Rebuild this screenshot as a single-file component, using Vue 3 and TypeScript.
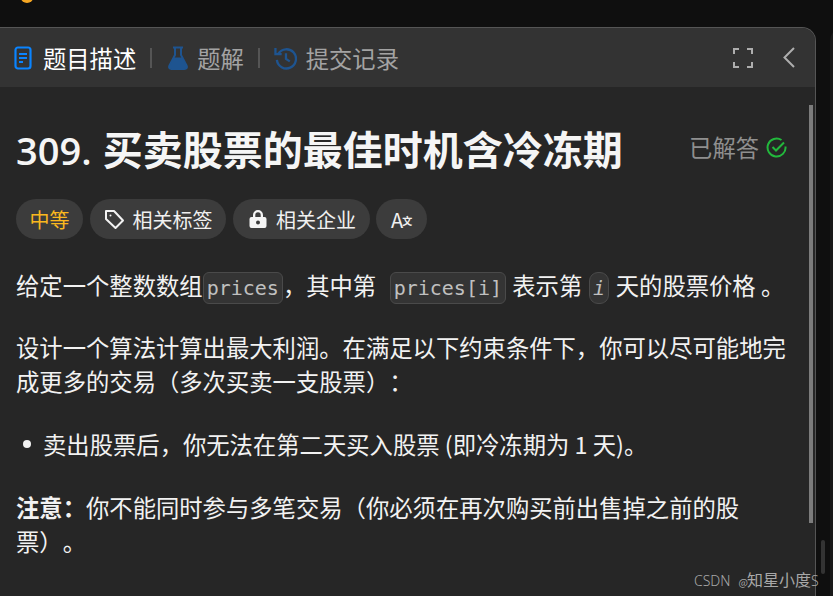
<template>
  <div class="screen">
    <i class="top-dot"></i>
    <div class="window">
      <section class="panel">
        <header class="tabs">
          <div class="tab active">
            <svg class="doc-icon" width="18" height="24" viewBox="0 0 18 24" fill="none" stroke="#0a84ff" stroke-width="2.200">
              <rect x="1.500" y="1.500" width="15" height="21" rx="2.500" />
              <path d="M5 8h8M5 12h8M5 16h4" />
            </svg>
            <span>题目描述</span>
          </div>
          <i class="divider"></i>
          <div class="tab">
            <svg class="flask-icon" width="20" height="24" viewBox="0 0 20 24" fill="none" stroke="#1e5490" stroke-width="2">
              <path d="M5 1.500h10M7 1.500V9L1.500 19.500c-1 2 0 3.500 2 3.500h13c2 0 3-1.500 2-3.500L13 9V1.500" />
              <path d="M5.500 11.500h9l4 8.500c.6 1.500-.3 2.500-1.800 2.500H3.300c-1.500 0-2.400-1-1.800-2.500z" fill="#1e5490" stroke="none" />
            </svg>
            <span>题解</span>
          </div>
          <i class="divider"></i>
          <div class="tab">
            <svg width="23" height="24" viewBox="0 0 24 24" fill="none" stroke="#1e5490" stroke-width="2.400">
              <path d="M4.500 7.500A10 10 0 1 1 3 14" />
              <path d="M1.500 1.500v6.500h6.500" />
              <path d="M12.500 7v6l4 2.500" />
            </svg>
            <span>提交记录</span>
          </div>
          <div class="tab-tools">
            <svg width="20" height="20" viewBox="0 0 20 20" fill="none" stroke="#aeaeae" stroke-width="2">
              <path d="M1 6V1h5M14 1h5v5M19 14v5h-5M6 19H1v-5" />
            </svg>
            <svg width="12" height="21" viewBox="0 0 12 21" fill="none" stroke="#aeaeae" stroke-width="2">
              <path d="M11 1 1.500 10.500 11 20" />
            </svg>
          </div>
        </header>

        <main class="content">
          <div class="title-row">
            <h1><span class="num">309.</span> 买卖股票的最佳时机含冷冻期</h1>
            <div class="solved">
              <span>已解答</span>
              <svg width="21" height="21" viewBox="0 0 21 21" fill="none" stroke="#22b83c" stroke-width="2">
                <path d="M19.500 9.500a9 9 0 1 1-4-6.500" />
                <path d="m6.500 10 3.500 3.500 8-8" />
              </svg>
            </div>
          </div>

          <div class="tags">
            <span class="tag level">中等</span>
            <span class="tag">
              <svg width="21" height="21" viewBox="0 0 21 21" fill="none" stroke="#f2f2f2" stroke-width="2">
                <path d="M2 2h8l9 9.500-7.500 7.500L2 10z" stroke-linejoin="round" />
                <circle cx="6.500" cy="6.500" r="1" fill="#f2f2f2" stroke="none" />
              </svg>
              相关标签
            </span>
            <span class="tag company">
              <svg width="18" height="20" viewBox="0 0 18 20" fill="#f4f4f4">
                <path fill-rule="evenodd" d="M4 8V6a5 5 0 0 1 10 0v2h1.500A2 2 0 0 1 17.500 10v7a2 2 0 0 1-2 2h-13a2 2 0 0 1-2-2v-7a2 2 0 0 1 2-2zm2.300 0h5.400V6a2.700 2.700 0 0 0-5.400 0zM9 11.500a2 2 0 1 0 0 4 2 2 0 0 0 0-4z" />
              </svg>
              相关企业
            </span>
            <span class="tag translate">A<small>文</small></span>
          </div>

          <p class="first">给定一个整数数组<code>prices</code>，其中第 &nbsp;<code class="mid">prices[i]</code> 表示第 <code class="var"><em>i</em></code> 天的股票价格 。</p>
          <p>设计一个算法计算出最大利润。在满足以下约束条件下，你可以尽可能地完成更多的交易（多次买卖一支股票）：</p>
          <ul>
            <li><span>卖出股票后，你无法在第二天买入股票 (即冷冻期为 1 天)。</span></li>
          </ul>
          <p class="note"><strong>注意：</strong>你不能同时参与多笔交易（你必须在再次购买前出售掉之前的股票）。</p>
        </main>
        <i class="scroll-thumb"></i>
      </section>
      <div class="next-panel"></div>
    </div>
    <i class="outer-thumb"></i>
    <span class="watermark"><span class="latin">CSDN</span><span class="at">@</span>知星小度<span class="latin">S</span></span>
  </div>
</template>

<script setup lang="ts">
</script>

<style>
html, body {
  margin: 0;
  background: #0f0f0f;
  overflow: hidden;
}
</style>

<style scoped>
.screen {
  position: relative;
  width: 833px;
  height: 596px;
  overflow: hidden;
  background: #0f0f0f;
  font-family: "Noto Sans CJK SC", "Liberation Sans", sans-serif;
  color: #f2f2f2;
  text-spacing-trim: space-all;
}

.top-dot {
  position: absolute;
  left: 21px;
  top: -7px;
  width: 12px;
  height: 10px;
  border-radius: 50%;
  background: #f5a623;
}

.window {
  padding-top: 27px;
  display: flex;
  gap: 14px;
}

.panel {
  position: relative;
  flex: none;
  width: 816px;
  height: 569px;
  box-sizing: border-box;
  background: #262626;
  border: 1px solid #555555;
  border-left: 0;
  border-bottom: 0;
  border-radius: 0 14px 0 0;
  overflow: hidden;
}

.next-panel {
  flex: none;
  width: 20px;
  height: 569px;
  background: #1a1a1a;
  border-radius: 14px 0 0 0;
}

.tabs {
  height: 59px;
  background: #333333;
  display: flex;
  align-items: center;
  padding-left: 14px;
  font-size: 23.300px;
  color: #a3a3a3;
}

.tab {
  display: flex;
  align-items: center;
  gap: 9px;
}

.tab.active {
  color: #ffffff;
}

.doc-icon {
  margin-right: 2px;
}

.flask-icon {
  margin-left: 2px;
}

.divider {
  width: 2px;
  height: 20px;
  margin: 0 14px;
  background: #555555;
}

.tab-tools {
  margin-left: auto;
  display: flex;
  align-items: center;
  gap: 30px;
  padding-right: 20px;
}

.content {
  padding: 33px 26px 0 16px;
}

.title-row {
  display: flex;
  align-items: center;
  justify-content: space-between;
}

h1 {
  margin: 0;
  font-size: 40px;
  line-height: 56px;
  font-weight: 700;
  color: #f5f5f5;
}

.num {
  margin-right: 2px;
  font-family: "Open Sans", "Noto Sans", sans-serif;
  font-size: 38px;
  font-weight: 600;
}

.solved {
  display: flex;
  align-items: center;
  gap: 7px;
  margin-top: -4px;
  margin-right: 2px;
  font-size: 23.300px;
  color: #8f8f8f;
}

.tags {
  display: flex;
  gap: 7px;
  margin-top: 21px;
}

.tag {
  height: 40px;
  display: flex;
  align-items: center;
  gap: 8px;
  padding: 0 13.500px;
  border-radius: 20px;
  background: #3c3c3c;
  font-size: 20px;
  color: #f0f0f0;
}

.level {
  color: #fbb81e;
}

.company {
  gap: 9px;
  padding: 0 14px 0 16px;
}

.translate {
  gap: 0;
  margin-left: -1px;
  padding: 0 15px;
}

.translate small {
  margin-left: -1px;
  margin-top: 3px;
  font-size: 10px;
  font-weight: 700;
}

p {
  margin: 26px 0 0;
  font-size: 23.330px;
  line-height: 34px;
  color: #f2f2f2;
}

p.first {
  margin-top: 29px;
}

p.note {
  margin-top: 29px;
}

code {
  display: inline-block;
  padding: 0 3px;
  border: 1px solid #4a4a4a;
  border-radius: 6px;
  background: #343434;
  font-family: "DejaVu Sans Mono", monospace;
  font-size: 20px;
  line-height: 30px;
  color: #c0c0c0;
}

.mid {
  margin-left: 3px;
  margin-right: 1px;
}

.var {
  margin-left: 2px;
  margin-right: 2px;
  padding: 0 2.500px;
  border-radius: 9px;
}

ul {
  margin: 29px 0 0;
  padding-left: 7px;
  list-style: none;
  font-size: 23.330px;
  line-height: 34px;
}

li {
  display: flex;
  align-items: center;
  gap: 12px;
}

li::before {
  content: "";
  flex: none;
  width: 8px;
  height: 8px;
  border-radius: 50%;
  background: #f2f2f2;
}

strong {
  font-weight: 700;
}

.scroll-thumb {
  position: absolute;
  right: 2px;
  top: 77px;
  width: 4px;
  height: 418px;
  background: #7c7c7c;
}

.watermark {
  position: absolute;
  left: 694px;
  top: 568px;
  font-size: 16px;
  line-height: 22px;
  color: #a8a8a8;
  white-space: nowrap;
}

.latin {
  font-family: "Noto Sans", sans-serif;
  font-size: 14px;
  font-weight: 300;
}

.at {
  margin-left: 8px;
  margin-right: -1px;
  font-size: 10px;
}

.outer-thumb {
  position: absolute;
  left: 821px;
  top: 540px;
  width: 4px;
  height: 34px;
  border-radius: 2px;
  background: #333333;
}
</style>
